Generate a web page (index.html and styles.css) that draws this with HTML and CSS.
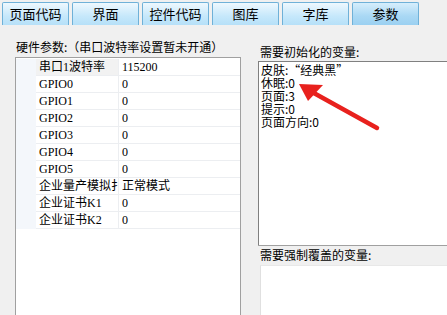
FILE: index.html
```html
<!DOCTYPE html>
<html lang="zh-CN">
<head>
    <meta charset="UTF-8">
    <meta name="viewport" content="width=device-width, initial-scale=1.0">
    <title>参数</title>
    <link rel="stylesheet" href="styles.css">
</head>
<body>
    <div class="tabs">
        <div class="tab">页面代码</div>
        <div class="tab">界面</div>
        <div class="tab">控件代码</div>
        <div class="tab">图库</div>
        <div class="tab">字库</div>
        <div class="tab active">参数</div>
    </div>

    <div class="main">
        <div class="left">
            <div class="label">硬件参数:（串口波特率设置暂未开通）</div>
            <div class="grid-box">
                <div class="row first"><span class="gutter"></span><span class="name">串口1波特率</span><span class="value">115200</span></div>
                <div class="row"><span class="gutter"></span><span class="name">GPIO0</span><span class="value">0</span></div>
                <div class="row"><span class="gutter"></span><span class="name">GPIO1</span><span class="value">0</span></div>
                <div class="row"><span class="gutter"></span><span class="name">GPIO2</span><span class="value">0</span></div>
                <div class="row"><span class="gutter"></span><span class="name">GPIO3</span><span class="value">0</span></div>
                <div class="row"><span class="gutter"></span><span class="name">GPIO4</span><span class="value">0</span></div>
                <div class="row"><span class="gutter"></span><span class="name">GPIO5</span><span class="value">0</span></div>
                <div class="row"><span class="gutter"></span><span class="name">企业量产模拟扌</span><span class="value">正常模式</span></div>
                <div class="row"><span class="gutter"></span><span class="name">企业证书K1</span><span class="value">0</span></div>
                <div class="row"><span class="gutter"></span><span class="name">企业证书K2</span><span class="value">0</span></div>
            </div>
        </div>

        <div class="right">
            <div class="label">需要初始化的变量:</div>
            <div class="text-box init">
                <div>皮肤:“经典黑”</div>
                <div>休眠:0</div>
                <div>页面:3</div>
                <div>提示:0</div>
                <div>页面方向:0</div>
            </div>
            <div class="label bar">需要强制覆盖的变量:</div>
            <div class="text-box override"></div>
        </div>
    </div>

    <svg class="arrow" width="447" height="315" viewBox="0 0 447 315">
        <line x1="377" y1="128" x2="312" y2="92" stroke="#e8211d" stroke-width="4.5" stroke-linecap="round"/>
        <polygon points="299,84 323,85 308,101" fill="#e8211d"/>
    </svg>
</body>
</html>
```

FILE: styles.css
```css
body {
    margin: 0;
    width: 447px;
    height: 315px;
    overflow: hidden;
    background-color: #f0f0f0;
    font-family: "Noto Sans CJK SC", sans-serif;
    color: #000;
    position: relative;
}
.tabs {
    display: flex;
    height: 25px;
    padding-left: 2px;
    gap: 3px;
    align-items: flex-end;
    box-sizing: border-box;
}
.tab {
    width: 67px;
    height: 23px;
    box-sizing: border-box;
    border: 1px solid #6fb1d8;
    border-bottom: none;
    border-radius: 2px 2px 0 0;
    background: linear-gradient(#eef8fe, #c6e8fb 60%, #b6e0f8);
    font-size: 13px;
    line-height: 22px;
    text-align: center;
}
.tab.active {
    background: linear-gradient(#d6eefc, #a9d8f4 60%, #9bd0f1);
}
.main {
    display: flex;
    height: 290px;
}
.label {
    font-size: 12px;
    line-height: 16px;
    white-space: nowrap;
}
.left {
    width: 241px;
    padding: 14px 0 0 15px;
    box-sizing: border-box;
    display: flex;
    flex-direction: column;
}
.left .label {
    margin-bottom: 2px;
    padding-left: 1px;
}
.grid-box {
    flex: 1;
    background: #fff;
    border: 1px solid #a0a0a0;
    border-bottom: none;
    padding-top: 1px;
}
.row {
    display: flex;
    height: 17px;
    font-family: "Liberation Serif", "Noto Sans CJK SC", serif;
    font-size: 12px;
    line-height: 17px;
}
.gutter {
    width: 20px;
    background: #f4f7fb;
}
.name {
    width: 83px;
    padding-left: 3px;
    box-sizing: border-box;
    border-right: 1px solid #eceef1;
    border-bottom: 1px solid #eceef1;
    white-space: nowrap;
    overflow: hidden;
}
.row.first .name {
    background: #f2f2f2;
}
.value {
    flex: 1;
    padding-left: 3px;
    border-bottom: 1px solid #eceef1;
}
.right {
    flex: 1;
    padding: 18px 0 0 17px;
    display: flex;
    flex-direction: column;
}
.right .label {
    line-height: 18px;
    padding-left: 2px;
}
.text-box {
    background: #fff;
    border-left: 1px solid #808080;
    border-top: 1px solid #808080;
}
.init {
    height: 182px;
    padding: 1px 0 0 2px;
    font-size: 12px;
    line-height: 13px;
}
.bar {
    height: 19px;
    border-top: 1px solid #a0a0a0;
    line-height: 20px;
}
.override {
    flex: 1;
    margin-left: 2px;
    border-left: 1px solid #e0e0e0;
    border-top: 1px solid #e8e8e8;
}
.arrow {
    position: absolute;
    left: 0;
    top: 0;
    pointer-events: none;
}
```
